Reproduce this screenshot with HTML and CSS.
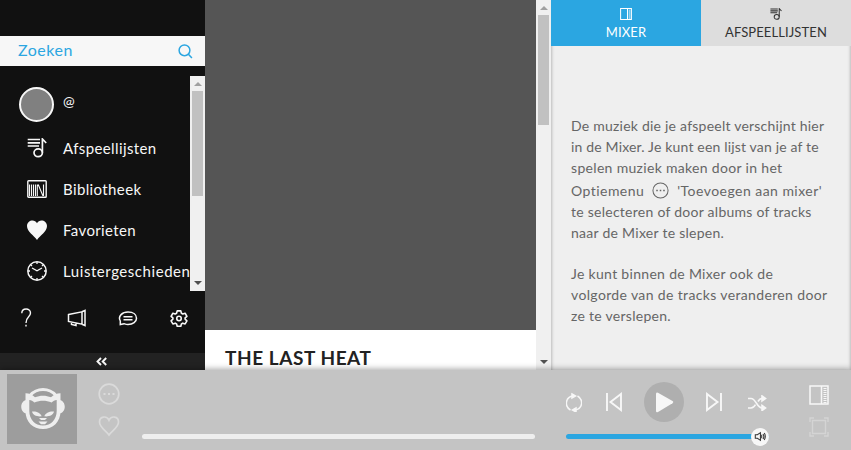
FILE: index.html
```html
<!DOCTYPE html>
<html lang="nl">
<head>
<meta charset="utf-8">
<title>Muziekspeler</title>
<link rel="stylesheet" href="styles.css">
</head>
<body>
<svg class="sprite" aria-hidden="true">
  <symbol id="playlist" viewBox="0 0 20 20"><path d="M.7 1.500h12.300M.7 4.800h12.300M.7 8h11.300" stroke-width="1.700"/><path d="M15.400 14.500V1l3.800 4" stroke-width="1.700"/><ellipse cx="11.200" cy="14.800" rx="4.200" ry="3.900" stroke-width="1.700"/></symbol>
  <symbol id="more" viewBox="0 0 22 22"><circle cx="11" cy="11" r="9.800"/><path d="M5.500 11h2M10 11h2M14.500 11h2" stroke-width="2"/></symbol>
  <symbol id="panel" viewBox="0 0 20 20"><path d="M1 1h18v18H1zM12.500 1v18"/><path d="M16 3v15" stroke-width="3" stroke-dasharray="1 1"/></symbol>
</svg>
<div class="app">
  <aside class="sidebar">
    <div class="search"><span>Zoeken</span>
      <svg class="icon" width="15" height="15" viewBox="0 0 15 15" stroke-width="1.500"><circle cx="6.500" cy="6.300" r="5.400"/><path d="m10.400 10.300 3.500 3.600"/></svg>
    </div>
    <div class="scroller">
      <nav class="menu">
        <div class="user"><span class="avatar"></span><span>@</span></div>
        <div class="entry"><svg class="icon" width="20" height="20"><use href="#playlist"/></svg><span>Afspeellijsten</span></div>
        <div class="entry"><svg class="icon" width="20" height="20" viewBox="0 0 20 20"><rect x=".8" y="1.800" width="18.400" height="16.400" rx=".8" stroke-width="1.400"/><path d="M2.500 5.500V17M4.500 5.500V17M6.500 5.500V17M8.500 5.500V17M10.300 5.500V17M11.200 5.500 16 17M16.500 5.500V17" stroke-width="1.100"/></svg><span>Bibliotheek</span></div>
        <div class="entry"><svg width="20" height="20" viewBox="0 0 20 20" fill="#f7f7f7"><path d="M10 20C7 15.500 0 11.500 0 6 0 .5 7.500-1.500 10 3.300 12.500-1.500 20 .5 20 6c0 5.500-7 9.500-10 14z"/></svg><span>Favorieten</span></div>
        <div class="entry history"><svg class="icon" width="20" height="20" viewBox="0 0 20 20" stroke-width="1.500"><circle cx="10" cy="10" r="9.200"/><path d="m5 7 5 2.800 5-2.800M10 1v2M10 17v2M1 10h2M17 10h2M3.600 3.600 5 5M15 15l1.400 1.400M16.400 3.600 15 5M5 15l-1.400 1.400" stroke-width="1.300"/></svg><span>Luistergeschiedenis</span></div>
      </nav>
      <div class="scrollbar"><i class="up"></i><b class="thumb short"></b><i class="down"></i></div>
    </div>
    <div class="tools">
      <svg class="icon" width="12" height="20" viewBox="0 0 12 20" stroke-width="1.400"><path d="M1.800 5.300C1.800-.5 10.500-.3 10.500 5c0 4.200-4.500 3.500-4.500 10"/><path d="M6 16.800v1.700"/></svg>
      <svg class="icon" width="20" height="20" viewBox="0 0 20 20" stroke-width="1.500"><path d="M1.500 6.500 15 3.800v12.400L1.500 13.500zM15 3.800 18 2.500v15l-3-1.300M4.500 14v2.500l4.500 1v-2"/></svg>
      <svg class="icon" width="20" height="20" viewBox="0 0 20 20" stroke-width="1.500"><path d="M2.300 16.500V13C-.5 8 4.500 4 10 4s8.500 2.700 8.500 6.200S15 16.500 10 16.500c-2 0-3-.5-4-.8z"/><path d="M5.500 8.800h9M5.500 11.800h9"/></svg>
      <svg class="icon" width="18" height="19" viewBox="0 0 20 20" stroke-width="1.800"><path d="M8 1.500h4l.7 2.600 1.500.9 2.600-.8 2 3.400-2 1.700v1.500l2 1.800-2 3.400-2.600-.8-1.500.8-.7 2.600H8L7.300 16l-1.500-.8-2.600.8-2-3.400 2-1.800V9.300l-2-1.700 2-3.400 2.600.8 1.500-.9z" stroke-linejoin="round"/><circle cx="10" cy="10" r="2.500"/></svg>
    </div>
    <div class="collapse"><svg class="icon" width="12" height="9" viewBox="0 0 12 9" stroke-width="1.900"><path d="M5 1 1.500 4.500 5 8M10.200 1 6.700 4.500l3.500 3.500"/></svg></div>
  </aside>
  <main class="content">
    <div class="article"><div class="hero"></div><h1>THE LAST HEAT</h1></div>
    <div class="scrollbar"><i class="up"></i><b class="thumb tall"></b><i class="down"></i></div>
  </main>
  <section class="mixer">
    <div class="tabs">
      <div class="tab active"><svg class="icon" width="12" height="12" stroke-width="1.700"><use href="#panel"/></svg><span>MIXER</span></div>
      <div class="tab"><svg class="icon" width="12" height="12"><use href="#playlist"/></svg><span>AFSPEELLIJSTEN</span></div>
    </div>
    <div class="help">
      <p><span class="l1">De muziek die je afspeelt verschijnt hier</span><span class="l2">in de Mixer. Je kunt een lijst van je af te</span><span class="l3">spelen muziek maken door in het</span><span class="l4 option">Optiemenu <svg class="icon" width="17" height="17" stroke-width="1.300"><use href="#more"/></svg> 'Toevoegen aan mixer'</span><span class="l5">te selecteren of door albums of tracks</span><span class="l6">naar de Mixer te slepen.</span></p>
      <p><span class="l7">Je kunt binnen de Mixer ook de</span><span class="l8">volgorde van de tracks veranderen door</span><span class="l9">ze te verslepen.</span></p>
    </div>
  </section>
  <footer class="player">
    <div class="cover"><svg width="44" height="42" viewBox="0 0 44 42"><path d="M5.500 12C-1.500 13-1.500 24.500 5.500 25.500zM38.500 12c7 1 7 12.500 0 13.500z" fill="#eee"/><path d="M9 7.500C16-.5 28-.5 35 7.500" fill="none" stroke="#eee" stroke-width="3"/><path d="M4.500 5.300c4 0 6.500 1.200 9.500 4 5-2.200 11-2.200 16 0 3-2.800 5.500-4 9.500-4V23c0 11-7.500 18-17.500 18S4.500 34 4.500 23zM8.300 12v11c0 8.500 5.700 14.500 13.700 14.500S35.700 31.500 35.700 23V12c-2 .3-3.500 1.200-5 2.500-6-2.500-11.400-2.500-17.400 0-1.500-1.300-3-2.200-5-2.500z" fill="#eee" fill-rule="evenodd"/><path d="M11 23.500c4-.5 8.500 1 9.700 4.800-5 .5-8.700-1-9.700-4.800zM33 23.500c-4-.5-8.500 1-9.700 4.800 5 .5 8.700-1 9.700-4.800zM18 30h8l-2 2h-4zM17.500 33.500h9L24 36.300h-4z" fill="#eee"/></svg></div>
    <div class="actions">
      <svg class="icon" width="22" height="22" stroke-width="1.700"><use href="#more"/></svg>
      <svg class="icon" width="22" height="22" viewBox="0 0 22 22" stroke-width="1.700"><path d="M11 20C8.500 16 1.500 12.500 1.500 7 1.500 1 9 .5 11 5.200 13 .5 20.500 1 20.500 7c0 5.500-7 9-9.500 13z"/></svg>
    </div>
    <div class="progress"></div>
    <div class="transport">
      <div class="buttons">
        <svg class="icon" width="16" height="20" viewBox="1 -1 16 20" stroke-width="1.500"><path d="M5.500 17C-1 13 .5 4 8 3M12.500 3C19 7 17.500 16 10 17"/><path d="m7 1 3.500 2L7 5zM11 15l-3.500 2 3.500 2z" fill="currentColor"/></svg>
        <svg class="icon" width="18" height="20" viewBox="0 0 18 20" stroke-width="1.900"><path d="M2 1v18M16 2v16L5.500 10z"/></svg>
        <div class="play"><svg width="19" height="21" viewBox="0 0 19 21" fill="#f7f7f7"><path d="M1 2Q1-.2 3 .8L17.500 9q1.500 1 0 2.200L3 20q-2 1-2-1z"/></svg></div>
        <svg class="icon" width="18" height="20" viewBox="0 0 18 20" stroke-width="1.900"><path d="M16 1v18M2 2v16l10.500-8z"/></svg>
        <svg class="icon shuffle" width="20" height="16" viewBox="0 0 20 16" stroke-width="1.600"><path d="M1 3.500h3c5 0 6 9.500 11 9.500h2M1 13h3c2 0 3.500-1.500 4.500-3.300M11 6.500c1-1.800 2-3 4-3h2"/><path d="m15 1 3.500 2.500L15 6zM15 10.500l3.500 2.500-3.500 2.500z" fill="currentColor"/></svg>
      </div>
      <div class="volume"><div class="knob"><svg class="icon" width="12" height="11" viewBox="0 0 14 12" stroke-width="1.200"><path d="M1.500 4H4l3.500-2.500v9L4 8H1.500zM9 4v4M10.500 3q2 3 0 6M12 2q2.400 4 0 8"/></svg></div></div>
    </div>
    <div class="views">
      <svg class="icon" width="20" height="20" stroke-width="1.500"><use href="#panel"/></svg>
      <svg class="icon faint" width="20" height="20" viewBox="0 0 20 20" stroke-width="1.400"><path d="M3.500 3.500h13v13h-13zM1 5V1h4M15 1h4v4M19 15v4h-4M5 19H1v-4"/></svg>
    </div>
  </footer>
</div>
</body>
</html>
```
FILE: styles.css
```css
* { box-sizing: border-box; }
body { margin: 0; font-family: Lato, "Liberation Sans", sans-serif; font-size: 15px; overflow: hidden; }
.sprite { display: none; }
svg { display: block; flex: none; }
.icon { fill: none; stroke: currentColor; }
.app { display: grid; grid-template: 370px 80px / 205px 346px 300px; width: 851px; height: 450px; }
.sidebar { display: flex; flex-direction: column; padding-top: 36px; background: #111; color: #f7f7f7; }
.search { display: flex; align-items: center; justify-content: space-between; height: 30px; padding: 0 12px 0 18px; background: #f7f7f7; color: #2ba6e1; font-size: 16px; letter-spacing: .5px; }
.search span { margin-top: -3px; }
.scroller { display: flex; height: 215px; margin-top: 10px; }
.menu { width: 190px; overflow: hidden; white-space: nowrap; }
.user { display: flex; align-items: center; height: 51px; padding: 5px 0 0 19px; gap: 9px; font-size: 14px; }
.user span:last-child { margin-top: -7px; }
.avatar { width: 35px; height: 35px; border: 2px solid #f7f7f7; border-radius: 50%; background: #808080; }
.entry { display: flex; align-items: center; gap: 16px; height: 41px; padding-left: 27px; letter-spacing: .38px; }
.history { letter-spacing: .55px; }
.scrollbar { display: flex; flex-direction: column; align-items: center; width: 15px; background: #f0f0f0; }
.up, .down { border: 4px solid transparent; border-top-width: 0; border-bottom: 4px solid #a0a0a0; margin: 6px 0 5px; }
.down { border-top: 4px solid #505050; border-bottom-width: 0; margin: auto 0 6px; }
.thumb { width: 11px; background: #c1c1c1; }
.short { height: 105px; }
.tall { height: 110px; }
.tools { display: grid; grid-template-columns: repeat(4, 51px); place-items: center; height: 62px; padding: 0 0 8px; }
.collapse { display: flex; align-items: center; justify-content: center; height: 17px; padding-right: 1px; background: #222; }
.content { display: flex; background: #fff; }
.article { width: 331px; }
.hero { height: 330px; background: #555; }
h1 { margin: 14px 0 0 20px; font-size: 19px; line-height: 28px; color: #222; font-weight: 700; letter-spacing: .55px; white-space: nowrap; }
.mixer { background: #efefef; color: #666; box-shadow: inset 3px 0 3px -2px #bbb, inset -3px 0 3px -2px #bbb; }
.tabs { display: grid; grid-template-columns: 150px 150px; height: 46px; }
.tab { display: flex; flex-direction: column; align-items: center; padding-top: 8px; background: #ddd; color: #333; font-size: 13px; line-height: 16px; letter-spacing: .1px; gap: 4px; }
.active { background: #2ba6e1; color: #fff; }
.help { padding: 69px 0 0 20px; font-size: 14px; line-height: 21px; }
.help p { margin: 0 0 20px; }
.help span { display: block; width: max-content; white-space: nowrap; }
.help .option { display: flex; align-items: center; gap: 8px; height: 23px; padding-top: 2px; }
.l1 { letter-spacing: .23px; }
.l2 { letter-spacing: .17px; }
.l3 { letter-spacing: .32px; }
.l4 { letter-spacing: .46px; }
.l5 { letter-spacing: .26px; }
.l6 { letter-spacing: .27px; }
.l7 { letter-spacing: .31px; }
.l8 { letter-spacing: .36px; }
.l9 { letter-spacing: .28px; }
.player { grid-column: 1 / -1; display: flex; position: relative; background: #c4c4c4; color: #f7f7f7; box-shadow: 0 -1px 6px rgba(0,0,0,.35); }
.cover { display: flex; align-items: center; justify-content: center; width: 70px; height: 70px; margin: 4px 0 0 7px; padding-left: 2px; background: #9d9d9d; }
.actions { display: flex; flex-direction: column; gap: 10px; padding-top: 13px; margin-left: 21px; color: #dadada; }
.progress { width: 393px; height: 5px; margin: 64px 0 0 22px; border-radius: 3px; background: #eee; }
.transport { width: 203px; margin-left: 31px; padding-top: 11px; }
.buttons { display: grid; grid-template-columns: 16px 64px 36px 64px 22px; place-items: center; height: 42px; }
.buttons .shuffle { margin-top: 2px; }
.play { display: flex; align-items: center; justify-content: center; width: 40px; height: 40px; border-radius: 50%; background: #afafaf; }
.volume { display: flex; align-items: center; justify-content: flex-end; width: 203px; height: 5px; margin-top: 11px; border-radius: 3px; background: #2ba6e1; }
.knob { display: flex; align-items: center; justify-content: center; width: 18px; height: 18px; flex: none; border-radius: 50%; background: #f7f7f7; color: #333; }
.views { display: flex; flex-direction: column; gap: 12px; padding-top: 15px; margin-left: 40px; }
.faint { color: #d4d4d4; }
```
